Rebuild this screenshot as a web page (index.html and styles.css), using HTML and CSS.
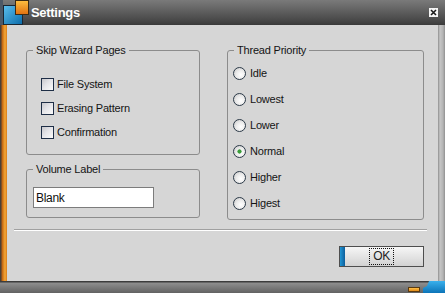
FILE: index.html
```html
<!DOCTYPE html>
<html lang="en">
<head>
  <meta charset="UTF-8" />
  <title>Settings</title>
  <link rel="stylesheet" href="styles.css">
</head>
<body>
  <div class="window">
    <div class="titlebar">
      <svg class="logo" viewBox="0 0 30 25">
        <defs>
          <linearGradient id="blue" x1="0" y1="0" x2="1" y2="1">
            <stop offset="0" stop-color="#5cc0f0" />
            <stop offset="1" stop-color="#0a6aa8" />
          </linearGradient>
          <linearGradient id="orange" x1="0" y1="0" x2="0" y2="1">
            <stop offset="0" stop-color="#ffc040" />
            <stop offset="1" stop-color="#e07010" />
          </linearGradient>
        </defs>
        <rect x="0" y="0" width="3" height="25" fill="#4c5866" />
        <rect x="3.5" y="5.5" width="19" height="19" fill="url(#blue)" stroke="#1a2632" />
        <rect x="15.5" y="0.5" width="13" height="14" fill="url(#orange)" stroke="#3a2a14" />
      </svg>
      <span class="title">Settings</span>
      <svg class="close" viewBox="0 0 9 9">
        <rect x="0" y="0" width="9" height="9" fill="#f4f4f4" />
        <path d="M2 2 L7 7 M7 2 L2 7" stroke="#1a1a1a" stroke-width="1.6" />
      </svg>
    </div>

    <div class="frame">
      <div class="edge-left"></div>
      <div class="content">
        <div class="panels">
          <div class="column">
            <fieldset class="group group-skip">
              <legend>Skip Wizard Pages</legend>
              <label class="option"><input type="checkbox" class="check"> File System</label>
              <label class="option"><input type="checkbox" class="check"> Erasing Pattern</label>
              <label class="option"><input type="checkbox" class="check"> Confirmation</label>
            </fieldset>
            <fieldset class="group group-volume">
              <legend>Volume Label</legend>
              <input type="text" class="text-field" value="Blank">
            </fieldset>
          </div>
          <fieldset class="group group-priority">
            <legend>Thread Priority</legend>
            <label class="option radio-row"><input type="radio" name="prio" class="radio"> Idle</label>
            <label class="option radio-row"><input type="radio" name="prio" class="radio"> Lowest</label>
            <label class="option radio-row"><input type="radio" name="prio" class="radio"> Lower</label>
            <label class="option radio-row"><input type="radio" name="prio" class="radio" checked> Normal</label>
            <label class="option radio-row"><input type="radio" name="prio" class="radio"> Higher</label>
            <label class="option radio-row"><input type="radio" name="prio" class="radio"> Higest</label>
          </fieldset>
        </div>

        <div class="divider"></div>

        <div class="actions">
          <button class="ok-btn"><span>OK</span></button>
        </div>
      </div>
      <div class="edge-right"></div>
    </div>

    <div class="statusbar">
      <div class="corner-orange"></div>
      <div class="corner-blue"></div>
    </div>
  </div>
</body>
</html>
```

FILE: styles.css
```css
* {
  margin: 0;
  padding: 0;
  box-sizing: border-box;
}

body {
  width: 445px;
  height: 293px;
  overflow: hidden;
  font-family: "Liberation Sans", Arial, sans-serif;
  font-size: 11px;
  letter-spacing: -0.2px;
  color: #141414;
}

.window {
  display: flex;
  flex-direction: column;
  height: 293px;
}

/* title bar */
.titlebar {
  height: 25px;
  flex: none;
  display: flex;
  align-items: center;
  background: linear-gradient(to bottom, #7a7a7a 0%, #626262 40%, #464646 85%, #3a3a3a 100%);
}

.logo {
  width: 30px;
  height: 25px;
  flex: none;
}

.title {
  margin-left: 1px;
  color: #fff;
  font: bold 13px "Liberation Sans", Arial, sans-serif;
  letter-spacing: -0.3px;
}

.close {
  margin-left: auto;
  margin-right: 7px;
  width: 9px;
  height: 9px;
}

/* frame */
.frame {
  flex: 1;
  display: flex;
  min-height: 0;
}

.edge-left {
  width: 7px;
  background: linear-gradient(to right, #4a4036 0, #4a4036 1px, #c0600c 2px, #f4a838 5px, #d87c18 7px);
}

.edge-right {
  width: 7px;
  background: linear-gradient(to right, #8e8e8e 0, #c6c6c6 2px, #b4b4b4 5px, #909090 7px);
}

.content {
  flex: 1;
  background: #d6d6d6;
  display: flex;
  flex-direction: column;
}

.panels {
  display: grid;
  grid-template-columns: 174px 197px;
  column-gap: 27px;
  padding: 18px 0 0 19px;
}

.column {
  display: flex;
  flex-direction: column;
  gap: 7px;
}

.group {
  border: 1px solid #8c8c8c;
  border-radius: 3px;
  min-width: 0;
}

.group legend {
  font-size: 11px;
  line-height: 14px;
  padding: 0 3px;
}

.group-skip {
  padding: 15px 0 10px 14px;
}

.group-skip legend {
  margin-left: -8px;
}

.group-volume {
  padding: 11px 0 9px 6px;
}

.group-priority {
  padding: 3px 0 3px 5px;
}

.group-priority legend {
  margin-left: 1px;
}

.option {
  display: flex;
  align-items: center;
  height: 24px;
  gap: 3px;
}

.radio-row {
  height: 26px;
  gap: 4px;
}

.check,
.radio {
  appearance: none;
  -webkit-appearance: none;
  margin: 0;
  width: 13px;
  height: 13px;
  flex: none;
}

.check {
  border: 1px solid #1e2e46;
  background: linear-gradient(135deg, #c8c8cc 0%, #e4e4e8 45%, #fbfbfb 100%);
}

.radio {
  border: 1px solid #2c3a48;
  border-radius: 50%;
  background: radial-gradient(circle at 62% 62%, #ffffff 0%, #ececec 45%, #c4c4c4 100%);
}

.radio:checked {
  background: radial-gradient(circle, #3a9c3a 0, #3a9c3a 1.8px, transparent 2.4px),
    radial-gradient(circle at 62% 62%, #ffffff 0%, #ececec 45%, #c4c4c4 100%);
}

.text-field {
  display: block;
  width: 121px;
  height: 21px;
  border: 1px solid #7c7c7c;
  padding: 0 2px;
  background: #fff;
  font-family: "Liberation Sans", Arial, sans-serif;
  font-size: 12px;
  letter-spacing: -0.3px;
  color: #111;
}

.divider {
  margin: 9px 11px 0 7px;
  height: 2px;
  border-top: 1px solid #a0a0a0;
  border-bottom: 1px solid #fff;
}

.actions {
  display: flex;
  justify-content: flex-end;
  padding: 15px 14px 0 0;
}

.ok-btn {
  width: 85px;
  height: 21px;
  border: 1px solid #4e4e4e;
  background: linear-gradient(to right, #2196d4 0, #0c5e9c 5px, transparent 5px),
    linear-gradient(to bottom, #f6f6f6, #d2d2d2);
  font-family: "Liberation Sans", Arial, sans-serif;
  font-size: 12px;
  letter-spacing: -0.3px;
  color: #222;
  display: flex;
  align-items: center;
  justify-content: center;
}

.ok-btn span {
  outline: 1px dotted #111;
  padding: 0 3px;
  line-height: 15px;
}

/* bottom bar */
.statusbar {
  height: 12px;
  flex: none;
  display: flex;
  justify-content: flex-end;
  align-items: flex-end;
  background: linear-gradient(to bottom, #3c3c3c 0, #3c3c3c 1px, #8e8e8e 2px, #626262 100%);
}

.corner-orange {
  width: 12px;
  height: 5px;
  margin: 0 3px 1px 0;
  background: linear-gradient(to bottom, #ffc048, #e08a18);
  border: 1px solid #5a3a10;
}

.corner-blue {
  width: 22px;
  height: 12px;
  background: linear-gradient(to bottom, #3ab0ec, #0c74b8);
  clip-path: polygon(6px 0, 100% 0, 100% 100%, 0 100%, 0 7px, 4px 5px);
}
```
